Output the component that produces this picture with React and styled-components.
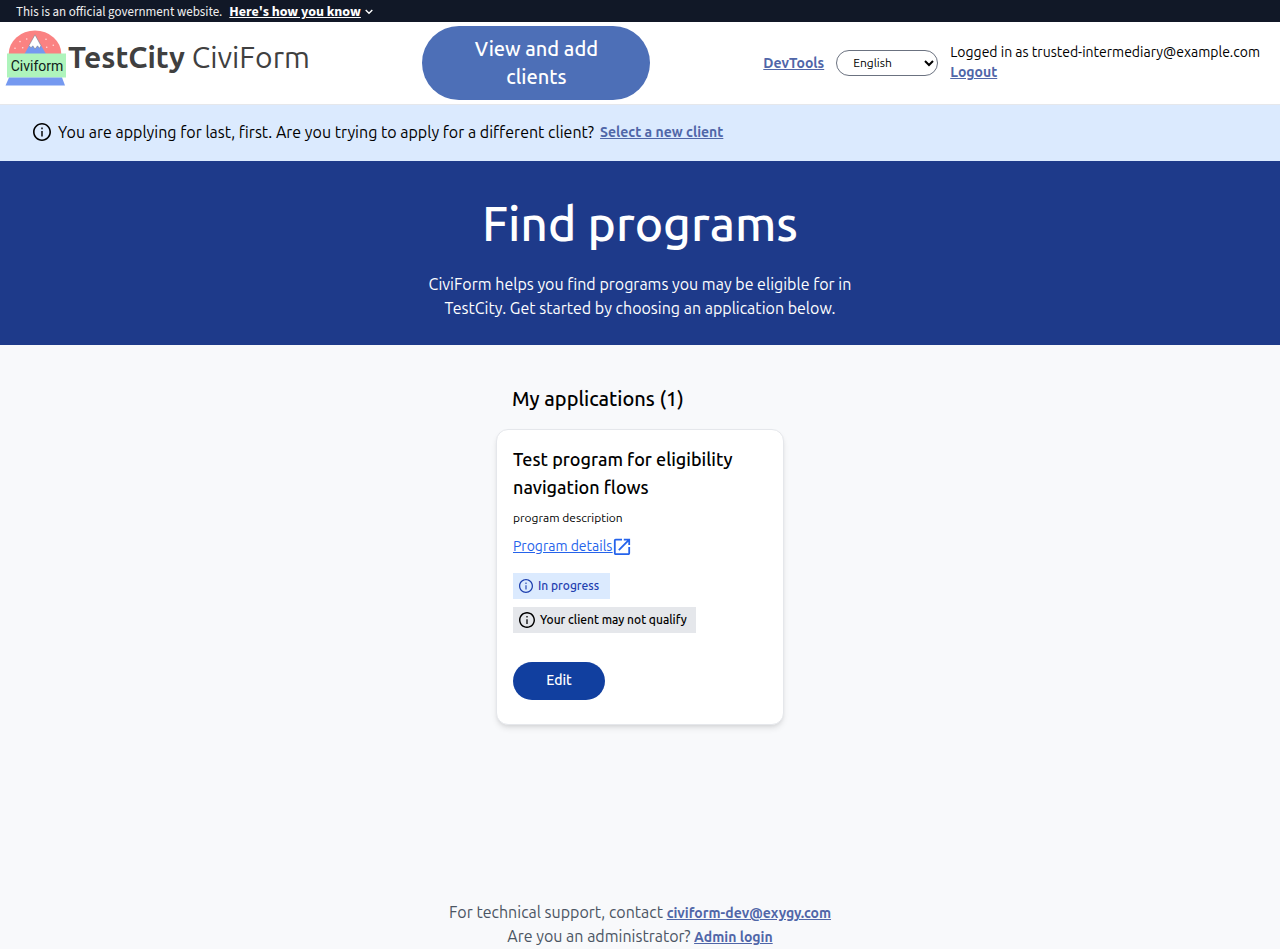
import React from "react";
import styled, { createGlobalStyle } from "styled-components";

const GlobalStyle = createGlobalStyle`
  *, *::before, *::after { box-sizing: border-box; }
  body {
    margin: 0;
    background: #f8f9fb;
    color: #000;
    font-family: Ubuntu, Lato, "Open Sans", sans-serif;
    font-size: 16px;
    line-height: 24px;
  }
  h1, h2, h3, p { margin: 0; }
`;

const Page = styled.div`
  min-height: 100vh;
  display: flex;
  flex-direction: column;
`;

const GovBanner = styled.div`
  display: flex;
  align-items: center;
  gap: 7px;
  padding: 2px 16px 0;
  background: #111827;
  color: #f0f0f0;
  font-family: "Source Sans 3", "Source Sans Pro", "Noto Sans CJK SC", sans-serif;
  font-size: 13px;
  line-height: 20px;
`;

const BannerToggle = styled.button`
  display: flex;
  align-items: center;
  gap: 4px;
  padding: 0;
  border: 0;
  background: none;
  color: #fff;
  font: inherit;
  font-size: 14px;
  font-weight: 700;
  cursor: pointer;
  span { text-decoration: underline; }
`;

const Header = styled.header`
  display: flex;
  align-items: center;
  padding: 4px 0;
  background: #fff;
  border-bottom: 1px solid #e5e7eb;
`;

const Brand = styled.a`
  flex: 0 0 33%;
  align-self: flex-start;
  display: flex;
  align-items: flex-start;
  gap: 2px;
  padding: 4px 0 0 5px;
  color: #404040;
  font-size: 30px;
  line-height: 54px;
  font-weight: 400;
  text-decoration: none;
  white-space: nowrap;
  b { font-weight: 700; }
`;

const ClientsButton = styled.button`
  width: 228px;
  padding: 9px 48px;
  border: 0;
  border-radius: 37px;
  background: #4d6fb7;
  color: #fff;
  font: inherit;
  font-size: 20px;
  line-height: 28px;
  font-weight: 500;
`;

const Account = styled.div`
  display: flex;
  align-items: center;
  gap: 12px;
  margin-left: auto;
  padding-right: 20px;
  font-size: 14px;
  line-height: 20px;
`;

const LoginStatus = styled.div`
  padding-bottom: 2px;
`;

const LanguageSelect = styled.select`
  width: 102px;
  height: 26px;
  padding: 0 0 1px 12px;
  border: 1px solid #6b7280;
  border-radius: 13px;
  background: #fff;
  color: #000;
  font: inherit;
  font-size: 12px;
`;

const TextLink = styled.a`
  color: #5066a8;
  font-size: 14px;
  line-height: 20px;
  font-weight: 700;
  text-decoration: underline;
`;

const ClientNotice = styled.div`
  display: flex;
  align-items: center;
  gap: 6px;
  padding: 15px 32px 17px;
  background: #dbeafe;
  svg { margin: 0 1px; }
`;

const Hero = styled.section`
  display: flex;
  flex-direction: column;
  align-items: center;
  gap: 18px;
  padding: 31px 16px 25px;
  background: #1e3a8a;
  color: #fff;
  text-align: center;
  h1 {
    font-size: 48px;
    line-height: 62px;
    font-weight: 500;
  }
  p { max-width: 448px; }
`;

const Programs = styled.main`
  width: 288px;
  max-width: 100%;
  margin: 40px auto 0;
  flex: 1;
`;

const SectionTitle = styled.h2`
  padding: 0 16px;
  margin-bottom: 16px;
  font-size: 20px;
  line-height: 28px;
  font-weight: 500;
`;

const Card = styled.article`
  display: flex;
  flex-direction: column;
  align-items: flex-start;
  padding: 15px 16px 24px;
  border: 1px solid #e5e7eb;
  border-radius: 12px;
  background: #fff;
  box-shadow: 0 4px 6px -1px rgba(0, 0, 0, 0.1), 0 2px 4px -2px rgba(0, 0, 0, 0.1);
  h3 {
    font-size: 18px;
    line-height: 28px;
    font-weight: 500;
  }
`;

const Description = styled.p`
  margin-top: 9px;
  font-size: 12px;
  line-height: 16px;
`;

const DetailsLink = styled.a`
  display: flex;
  align-items: center;
  gap: 1px;
  margin: 10px 0 17px;
  color: #2563eb;
  font-size: 14px;
  line-height: 20px;
  span { text-decoration: underline; }
`;

const Badge = styled.div`
  display: flex;
  align-items: center;
  gap: 5px;
  height: 26px;
  padding: 0 ${(p) => (p.$tone === "info" ? "11px" : "9px")} 0 6px;
  margin-bottom: 8px;
  background: ${(p) => (p.$tone === "info" ? "#dbeafe" : "#e5e7eb")};
  color: ${(p) => (p.$tone === "info" ? "#1e40af" : "#000")};
  font-size: 12px;
  line-height: 16px;
  font-weight: 500;
`;

const EditButton = styled.button`
  margin-top: 21px;
  height: 38px;
  width: 92px;
  padding: 0 0 2px;
  border: 0;
  border-radius: 19px;
  background: #113f9f;
  color: #fff;
  font: inherit;
  font-size: 14px;
  font-weight: 500;
`;

const Footer = styled.footer`
  padding: 32px 16px 1px;
  color: #4b5563;
  text-align: center;
`;

const InfoIcon = ({ size }) => (
  <svg width={size} height={size} viewBox="2 2 20 20" fill="currentColor" aria-hidden="true">
    <path d="M11.2 7h1.6v2h-1.6zm0 4h1.6v6h-1.6zM12 2C6.48 2 2 6.48 2 12s4.48 10 10 10 10-4.48 10-10S17.52 2 12 2zm0 18.2c-4.52 0-8.2-3.68-8.2-8.2s3.68-8.2 8.2-8.2 8.2 3.68 8.2 8.2-3.68 8.2-8.2 8.2z" />
  </svg>
);

const OpenIcon = () => (
  <svg width="18" height="18" viewBox="2 1 20 20" fill="currentColor" aria-hidden="true">
    <path d="M19 19H5V5h7V3H5c-1.11 0-2 .9-2 2v14c0 1.1.89 2 2 2h14c1.1 0 2-.9 2-2v-7h-2v7zM14 3v2h3.59l-9.83 9.83 1.41 1.41L19 6.41V10h2V3h-7z" />
  </svg>
);

const Chevron = () => (
  <svg width="8" height="6" viewBox="0 0 8 6" fill="none" stroke="currentColor" strokeWidth="1.4" aria-hidden="true">
    <path d="M.7 1 4 4.3 7.3 1" />
  </svg>
);

const stars = [[15, 11.6], [21.7, 9], [17.7, 17.7], [10, 18.3], [41, 9.3], [48.3, 15.3], [41.7, 17.3]];

const Logo = () => (
  <svg width="61" height="57" viewBox="0 0 61 57" role="img" aria-label="Civiform logo">
    <path d="M3.7 24a26.3 23.5 0 0 1 52.6 0Z" fill="#fa8282" />
    {stars.map(([x, y]) => (
      <circle key={`${x}-${y}`} cx={x} cy={y} r=".8" fill="#fdd" />
    ))}
    <path d="M19.5 24 30 5l11 19Z" fill="#7599f0" />
    <path d="M24 15.5 30 4.8l6 11-1.5 2.4-2-2.4-2.5 3.3-2.2-3.3-1.8 2Z" fill="#fff" stroke="#777" strokeWidth=".5" />
    <rect x="2" y="23.5" width="59" height="24" fill="#aef4bc" />
    <path d="M4 47.5h53L60 55.5H.5Z" fill="#7599f0" />
    <text x="32" y="41" textAnchor="middle" fontFamily="Roboto, sans-serif" fontSize="14" fill="#10201a">Civiform</text>
  </svg>
);

export default function App() {
  return (
    <Page>
      <GlobalStyle />
      <GovBanner>
        This is an official government website.
        <BannerToggle type="button">
          <span>Here's how you know</span>
          <Chevron />
        </BannerToggle>
      </GovBanner>
      <Header>
        <Brand href="#">
          <Logo />
          <span><b>TestCity</b> CiviForm</span>
        </Brand>
        <ClientsButton type="button">View and add clients</ClientsButton>
        <Account>
          <TextLink href="#">DevTools</TextLink>
          <LanguageSelect aria-label="Language" defaultValue="en">
            <option value="en">English</option>
          </LanguageSelect>
          <LoginStatus>
            <div>Logged in as trusted-intermediary@example.com</div>
            <TextLink href="#">Logout</TextLink>
          </LoginStatus>
        </Account>
      </Header>
      <ClientNotice>
        <InfoIcon size={18} />
        <span>You are applying for last, first. Are you trying to apply for a different client?</span>
        <TextLink href="#">Select a new client</TextLink>
      </ClientNotice>
      <Hero>
        <h1>Find programs</h1>
        <p>CiviForm helps you find programs you may be eligible for in TestCity. Get started by choosing an application below.</p>
      </Hero>
      <Programs>
        <SectionTitle>My applications (1)</SectionTitle>
        <Card>
          <h3>Test program for eligibility navigation flows</h3>
          <Description>program description</Description>
          <DetailsLink href="#">
            <span>Program details</span>
            <OpenIcon />
          </DetailsLink>
          <Badge $tone="info">
            <InfoIcon size={14} />
            In progress
          </Badge>
          <Badge>
            <InfoIcon size={16} />
            Your client may not qualify
          </Badge>
          <EditButton type="button">Edit</EditButton>
        </Card>
      </Programs>
      <Footer>
        <div>For technical support, contact <TextLink href="#">civiform-dev@exygy.com</TextLink></div>
        <div>Are you an administrator? <TextLink href="#">Admin login</TextLink></div>
      </Footer>
    </Page>
  );
}
